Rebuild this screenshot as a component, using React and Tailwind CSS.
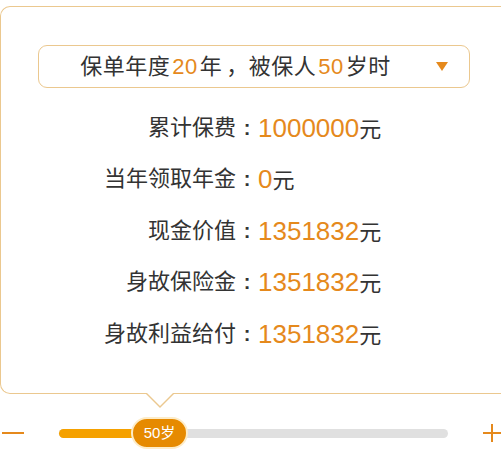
import React from 'react';

const rows = [
  { label: '累计保费', value: '1000000' },
  { label: '当年领取年金', value: '0' },
  { label: '现金价值', value: '1351832' },
  { label: '身故保险金', value: '1351832' },
  { label: '身故利益给付', value: '1351832' },
];

const font = { fontFamily: '"Liberation Sans", "Noto Sans CJK SC", sans-serif' };

export default function App() {
  return (
    <div className="w-[501px] h-[454px] overflow-hidden bg-white text-[#333]" style={font}>
      {/* CARD */}
      <div className="relative mt-[6px] h-[388px] border border-r-0 border-[#ebc88f] rounded-l-[10px] pt-[38px]">
        <div className="ml-[37px] w-[432px] h-[43px] border border-[#ebc88f] rounded-[9px] flex items-center">
          <div className="flex-1 flex justify-center items-center pl-[4px] text-[22px] leading-none tracking-[0.5px]">
            <span>保单年度</span>
            <span className="text-[#e5891c] mx-[2px]">20</span>
            <span>年</span>
            <span className="ml-[4px]">，</span>
            <span>被保人</span>
            <span className="text-[#e5891c] mx-[2px]">50</span>
            <span>岁时</span>
          </div>
          <svg width="12" height="9" viewBox="0 0 12 9" className="mr-[21px] ml-[8px]">
            <path d="M0 0 L12 0 L6 9 Z" fill="#e5891c" />
          </svg>
        </div>

        <div className="mt-[14px] flex flex-col">
          {rows.map((r) => (
            <div key={r.label} className="h-[51.5px] flex items-center">
              <div className="w-[257px] flex justify-end items-baseline text-[22px] leading-none">
                <span>{r.label}</span>
                <span className="inline-block w-[22px] text-center font-bold text-[20px]">:</span>
              </div>
              <div className="flex items-baseline leading-none">
                <span className="text-[26px] text-[#e5891c]">{r.value}</span>
                <span className="text-[22px]">元</span>
              </div>
            </div>
          ))}
        </div>

        {/* pointer */}
        <div className="absolute left-[145px] bottom-[-15px] w-0 h-0 border-l-[14px] border-r-[14px] border-t-[14px] border-l-transparent border-r-transparent border-t-[#ebc88f]" />
        <div className="absolute left-[146px] bottom-[-13px] w-0 h-0 border-l-[13px] border-r-[13px] border-t-[13px] border-l-transparent border-r-transparent border-t-white" />
      </div>

      {/* SLIDER */}
      <div className="mt-[22px] flex items-center h-[34px]">
        <div className="ml-[2px] w-[22px] h-[2px] bg-[#e5891c]" />
        <div className="relative ml-[35px] w-[389px] h-[9px] rounded-full bg-[#e0e0e0]">
          <div className="absolute left-0 top-0 h-full w-[90px] rounded-l-full bg-[#f5a100]" />
          <div className="absolute left-[72px] top-1/2 -translate-y-1/2 w-[57px] h-[32px] rounded-full bg-[#e68a00] border-2 border-[#fdecc8] flex items-center justify-center text-white text-[15px]">
            50岁
          </div>
        </div>
        <div className="relative ml-[35px] w-[18px] h-[18px]">
          <div className="absolute left-0 top-[8px] w-[18px] h-[2px] bg-[#e5891c]" />
          <div className="absolute left-[8px] top-0 w-[2px] h-[18px] bg-[#e5891c]" />
        </div>
      </div>
    </div>
  );
}
